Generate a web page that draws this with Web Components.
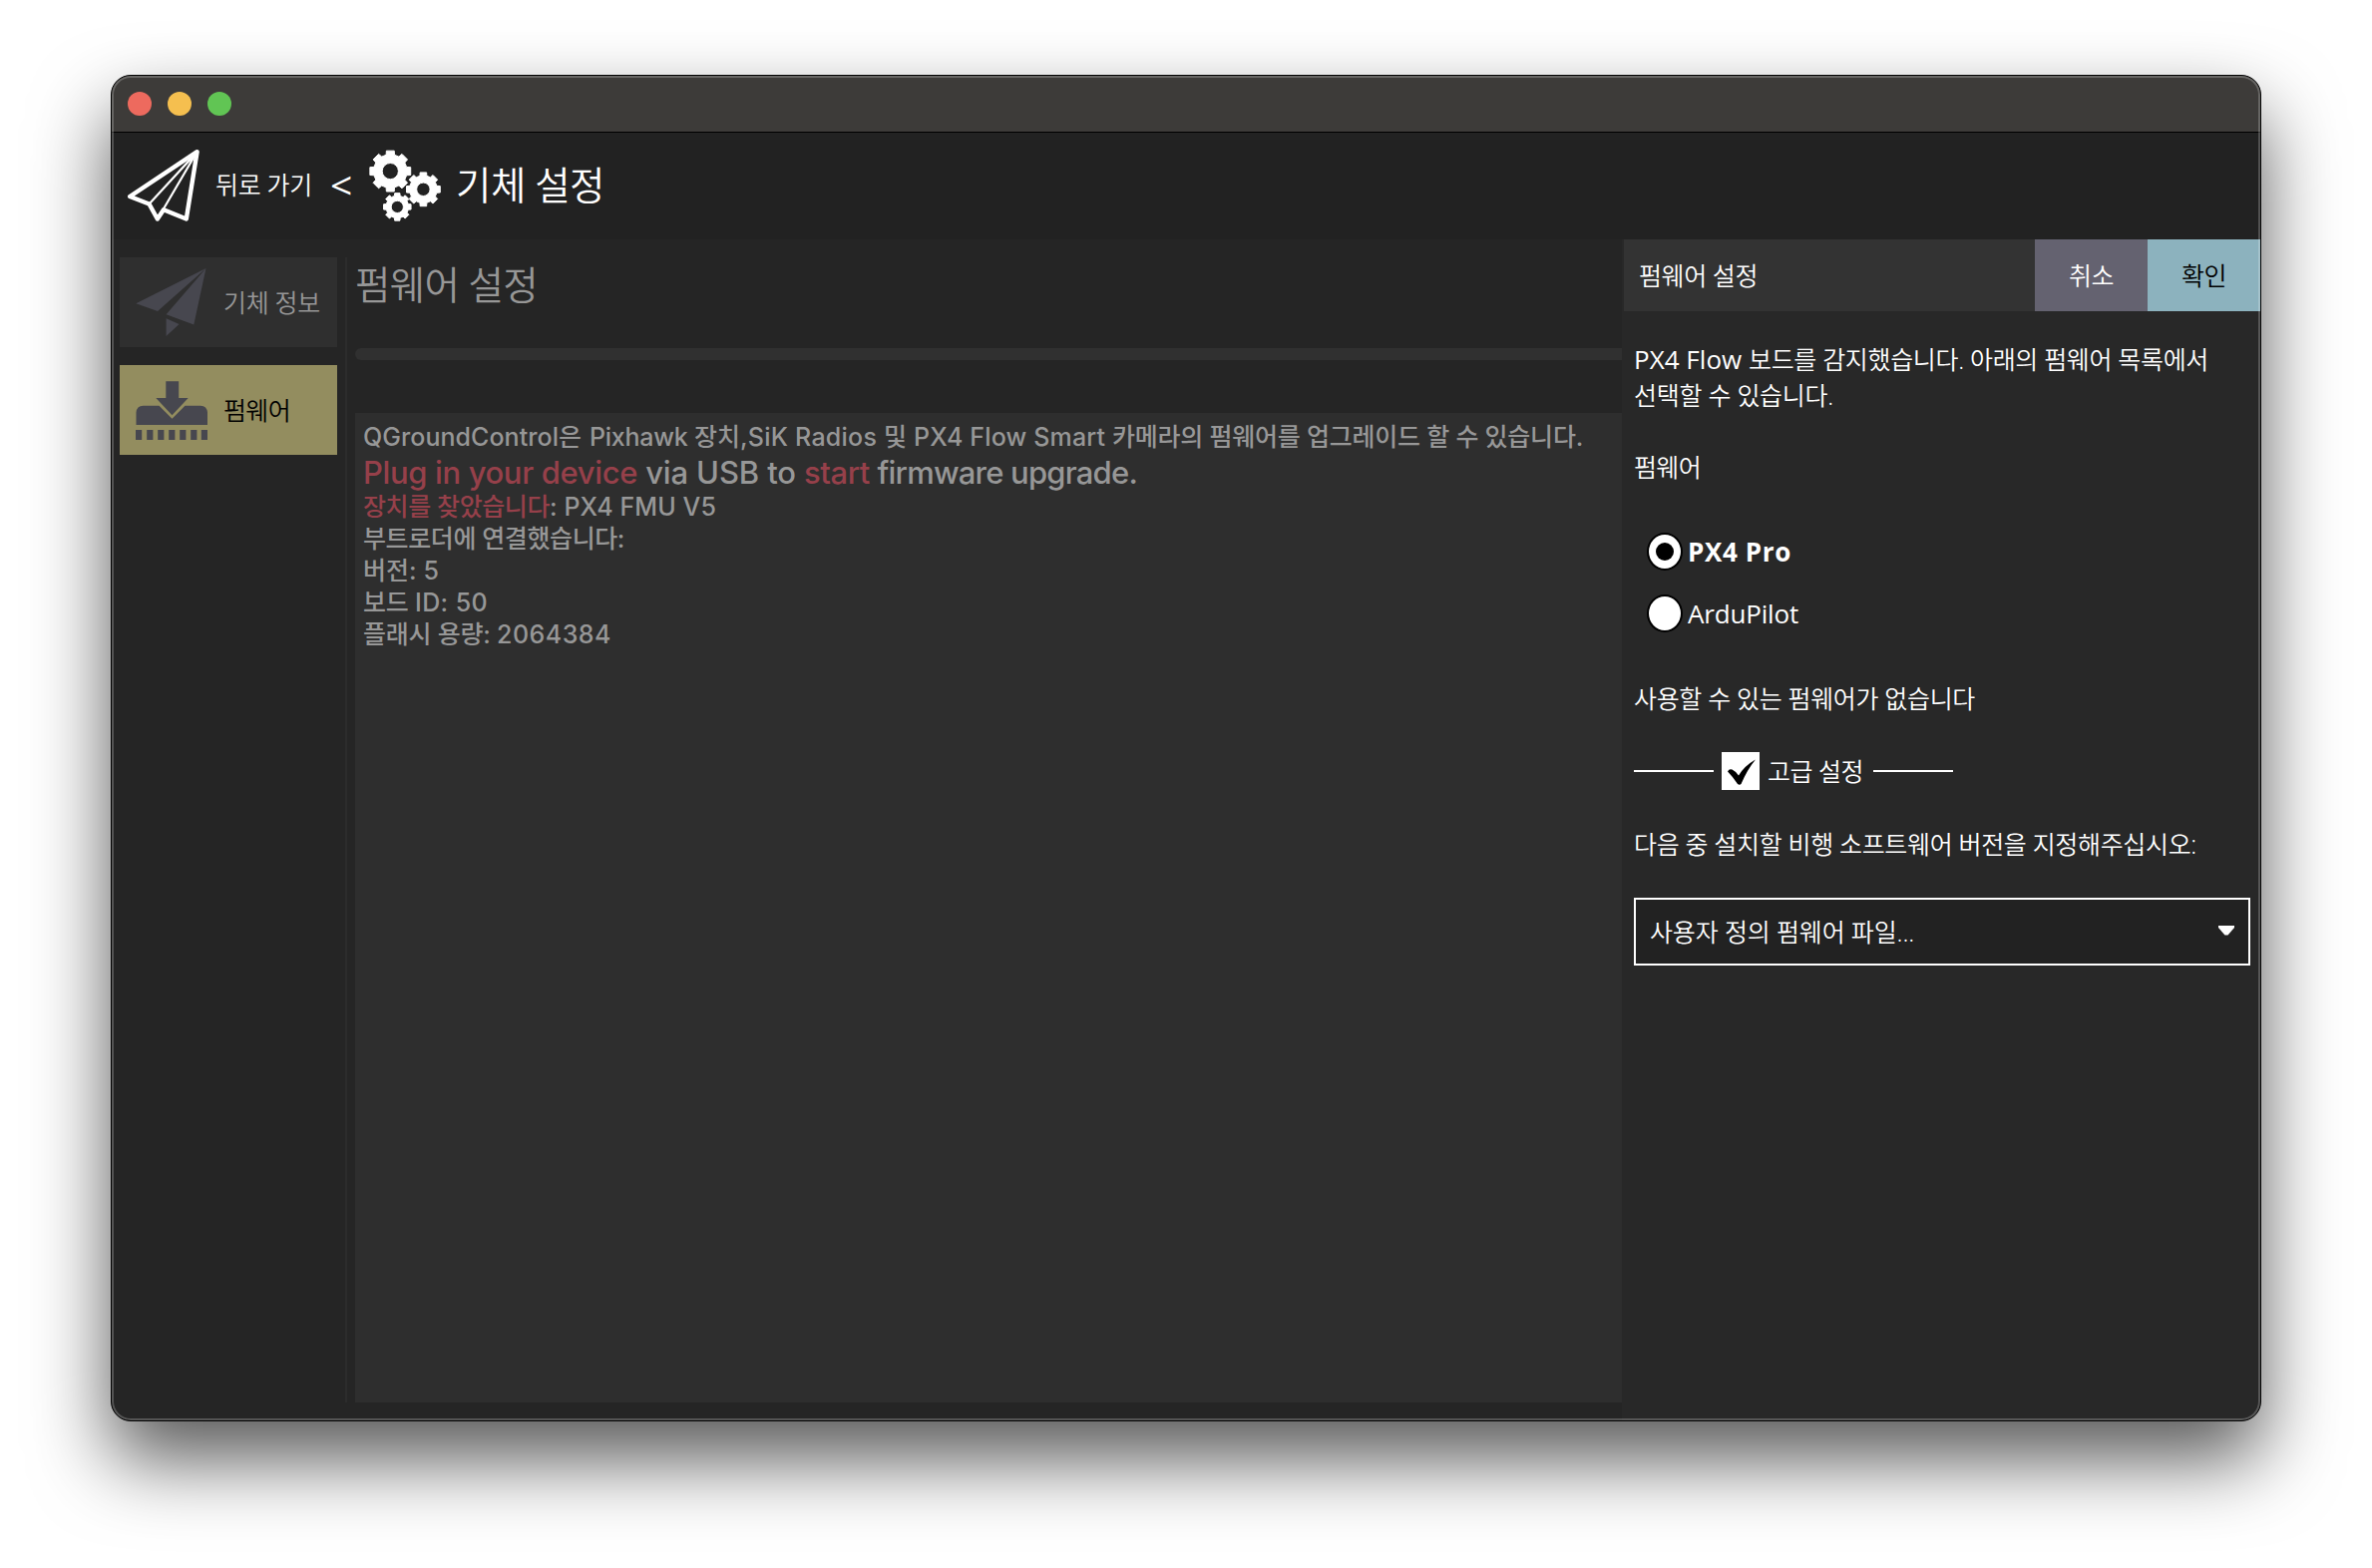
<!DOCTYPE html>
<html lang="ko">
<head>
<meta charset="utf-8">
<title>기체 설정</title>
<style>
html,body{margin:0;height:100%;background:#fff;overflow:hidden}
body{display:block;padding:75px 111px;box-sizing:border-box;font-family:"Open Sans","Noto Sans CJK KR",sans-serif;color:#fff}
</style>
</head>
<body>
<gs-window>
  <gs-toolbar slot="toolbar"></gs-toolbar>
  <gs-sidebar slot="side"></gs-sidebar>
  <gs-firmware slot="main"></gs-firmware>
  <gs-panel slot="panel"></gs-panel>
</gs-window>
<script>
const define=(name,html,after)=>customElements.define(name,class extends HTMLElement{
  constructor(){super();this.attachShadow({mode:'open'}).innerHTML=html;}
  connectedCallback(){if(after)after(this);}
});

/* A run of text tracked to an exact advance width: w = width, s = font size. */
define('gs-text',`<style>
:host{display:inline-block;white-space:pre;line-height:36px;font-size:25px}
:host([light]){font-weight:350}
</style><slot></slot>`,el=>{
  const s=el.getAttribute('s'),w=+el.getAttribute('w');
  if(s)el.style.fontSize=s+'px';
  if(w){
    el.style.width='max-content';
    const natural=el.getBoundingClientRect().width,n=[...el.textContent].length;
    el.style.letterSpacing=((w-natural)/n).toFixed(3)+'px';
    el.style.width=w+'px';
  }
});

function gear(cx,cy,r,hole){
  const n=8,ri=r*.81,p=[];
  for(let i=0;i<n;i++){
    const a=i*2*Math.PI/n;
    for(const [d,rad] of [[-.25,ri],[-.19,r],[.19,r],[.25,ri]])
      p.push((cx+rad*Math.sin(a+d)).toFixed(2)+' '+(cy-rad*Math.cos(a+d)).toFixed(2));
  }
  return `<path fill-rule="evenodd" stroke="#fff" stroke-width="1" stroke-linejoin="round" d="M${p.join('L')}ZM${cx-hole} ${cy}a${hole} ${hole} 0 1 0 ${2*hole} 0a${hole} ${hole} 0 1 0 ${-2*hole} 0Z"/>`;
}
define('gs-icon-gears',`<style>:host{display:block;width:72px;height:72px}svg{display:block}</style>
<svg width="72" height="72" fill="#fff">${gear(21.3,21.6,20.8,8.1)}${gear(54.4,39.8,17.2,6.7)}${gear(28.3,57.4,14,6.1)}</svg>`);

define('gs-icon-plane-outline',`<style>:host{display:block;width:72px;height:72px}svg{display:block}</style>
<svg width="72" height="72" fill="none" stroke="#fff" stroke-linejoin="round" stroke-linecap="round">
<path stroke-width="4.400" d="M69.600 2.200L2.200 47L21.500 54.500L29.800 69.500L36 60.300L58.800 69.500Z"/>
<path stroke-width="2.200" d="M69 3L22 54M69 3L35 61"/></svg>`);

define('gs-icon-plane',`<style>:host{display:block;width:72px;height:72px}svg{display:block}</style>
<svg width="72" height="72" fill="#47474f"><path d="M.3 37.300L70.500 2L22 45ZM70.500 2L58.300 58.500L30.600 48.300ZM30.600 52.300L43.600 58L30.600 70Z"/></svg>`);

define('gs-icon-firmware',`<style>:host{display:block;width:72px;height:72px}svg{display:block}</style>
<svg width="72" height="72" fill="#47474f"><path d="M.5 51V38.500Q1 32 7.500 31.700H23.500L36.500 44.700L49.500 31.700H65Q71.500 32 72 38.500V51Z"/>
<path d="M30.300 7.300H43.200V24H52.700L36.500 41.200L20.300 24H30.300Z"/>
<path d="M0 56h6.200v10H0zM11.200 56h6.200v10h-6.200zM22.200 56h6.200v10h-6.200zM33.200 56h6.200v10h-6.200zM44.200 56h6.200v10h-6.200zM55.200 56h6.200v10h-6.200zM65.800 56h6.200v10h-6.200z"/></svg>`);

define('gs-window',`<style>
:host{display:grid;grid-template-rows:56px 108px 1fr;grid-template-columns:228px 1286px 1fr;position:relative;width:2154px;height:1348px;
 border:1px solid #000;border-radius:20px;overflow:hidden;background:#252525}
:host{box-shadow:0 38px 78px rgba(0,0,0,.66)}
.bar{grid-column:1/-1;background:#3d3b39;display:flex;align-items:center;gap:16px;padding-left:16px;box-sizing:border-box}
i{width:24px;height:24px;border-radius:50%}
.tool{grid-column:1/-1;background:#222;border-top:1px solid #000;display:flex}
.rim{position:absolute;inset:0;border-radius:19px;box-shadow:inset 0 0 0 2px rgba(255,255,255,.22);pointer-events:none}
</style>
<div class="bar"><i style="background:#ed6a5e"></i><i style="background:#f5bf4f"></i><i style="background:#61c554"></i></div>
<div class="tool"><slot name="toolbar"></slot></div>
<slot name="side"></slot><slot name="main"></slot><slot name="panel"></slot>
<div class="rim"></div>`);

define('gs-toolbar',`<style>
:host{display:flex;align-items:center;padding:0 0 1px 16px}
.back{margin-left:16px}.lt{margin:0 18px 0 18px}.title{margin-left:15px}
gs-text{padding-bottom:2px}
gs-text.title,gs-text.lt{line-height:54px}
</style>
<gs-icon-plane-outline></gs-icon-plane-outline>
<gs-text light class="back" w="97">뒤로 가기</gs-text>
<gs-text class="lt" s="39" w="21">&lt;</gs-text>
<gs-icon-gears></gs-icon-gears>
<gs-text light class="title" s="38.5" w="149">기체 설정</gs-text>`);

define('gs-nav-button',`<style>
:host{display:flex;align-items:center;height:90px;width:218px;box-sizing:border-box;padding-left:16px;gap:16px;background:#2f2f2f;color:#979797}
:host([active]){background:#938d5f;color:#000}
</style><slot name="icon"></slot><slot></slot>`);

define('gs-sidebar',`<style>
:host{display:flex;flex-direction:column;gap:18px;margin:18px 0;padding-left:8px}
</style>
<gs-nav-button><gs-icon-plane slot="icon"></gs-icon-plane><gs-text light w="97">기체 정보</gs-text></gs-nav-button>
<gs-nav-button active><gs-icon-firmware slot="icon"></gs-icon-firmware><gs-text light w="67">펌웨어</gs-text></gs-nav-button>`);

define('gs-firmware',`<style>
:host{display:flex;flex-direction:column;margin:18px 0 18px 6px;border-left:2px solid #2c2c2c;padding-left:8px;color:#979797;width:1270px}
.head{display:flex;height:54px}
.head gs-text{line-height:54px}
.progress{height:12px;border-radius:6px 0 0 6px;background:#303030;margin:37px 0 53px}
.log{flex:1;background:#2e2e2e;padding:8px 0 0 8px;font-family:Inter,"Noto Sans CJK KR",sans-serif;font-weight:500}
.row{display:flex;height:32px}.row gs-text{line-height:32px}
.big{height:38px}.big gs-text{line-height:39px}
.red{color:#96404a}
</style>
<div class="head"><gs-text light s="38.5" w="183">펌웨어 설정</gs-text></div>
<div class="progress"></div>
<div class="log">
<div class="row"><gs-text w="196">QGroundControl</gs-text><gs-text w="31">은 </gs-text><gs-text w="105">Pixhawk </gs-text><gs-text w="46">장치</gs-text><gs-text w="144">,SiK Radios </gs-text><gs-text w="30">및 </gs-text><gs-text w="199">PX4 Flow Smart </gs-text><gs-text w="472">카메라의 펌웨어를 업그레이드 할 수 있습니다.</gs-text></div>
<div class="row big"><gs-text class="red" s="31" w="275">Plug in your device</gs-text><gs-text s="31" w="167"> via USB to </gs-text><gs-text class="red" s="31" w="66">start</gs-text><gs-text s="31" w="268"> firmware upgrade.</gs-text></div>
<div class="row"><gs-text class="red" w="187">장치를 찾았습니다</gs-text><gs-text w="167">: PX4 FMU V5</gs-text></div>
<div class="row"><gs-text w="262">부트로더에 연결했습니다:</gs-text></div>
<div class="row"><gs-text w="76">버전: 5</gs-text></div>
<div class="row"><gs-text w="52">보드 </gs-text><gs-text w="73">ID: 50</gs-text></div>
<div class="row"><gs-text w="134">플래시 용량: </gs-text><gs-text w="115">2064384</gs-text></div>
</div>`);

define('gs-radio',`<style>
:host{display:flex;align-items:center;height:38px;gap:5px;padding-left:13px}
.dot{width:36px;height:38px;box-sizing:border-box;border:2px solid #000;border-radius:50%;background:#fff;display:flex;align-items:center;justify-content:center}
:host([checked]){font-weight:700}
:host([checked]) .dot::after{content:"";width:18px;height:18px;border-radius:50%;background:#000}
</style><span class="dot"></span><slot></slot>`);

define('gs-section-toggle',`<style>
:host{display:flex;align-items:center;height:38px}
hr{width:80px;height:2px;margin:0;border:0;background:#fff}
.box{width:38px;height:38px;background:#fff;margin:0 8px}
gs-text{margin-right:10px}svg{display:block}
</style><hr><span class="box"><svg width="38" height="38"><path d="M6 19.500Q7.500 16.200 10.500 17.500Q14.500 19.500 17 23.500Q23 13.500 34 7.500Q26 17 19.500 32Q18 33.500 16 32Q11 24.500 6 19.500Z"/></svg></span><gs-text light w="96">고급 설정</gs-text><hr>`);

define('gs-combo',`<style>
:host{display:flex;align-items:center;justify-content:space-between;width:618px;height:68px;box-sizing:border-box;border:2px solid #fff;background:#222;padding:0 14px}
svg{display:block;margin-top:-3px}
</style><slot></slot><svg width="16" height="10"><path fill="#fff" d="M0 0H16V2L9.500 9.500H6.500L0 2Z"/></svg>`);

define('gs-panel',`<style>
:host{display:flex;flex-direction:column;background:#282828;border-left:0}
header{display:flex;height:72px;margin-left:2px;background:#333}
header gs-text{line-height:72px}
.t{flex:1;padding-left:15px}
.btn{width:113px;display:flex;justify-content:center;background:#646270}
.ok{background:#8cb2be;color:#000}
.body{display:flex;flex-direction:column;align-items:flex-start;gap:36px;padding:30px 0 0 12px}
.line{display:flex}
.radios{display:flex;flex-direction:column;gap:24px;margin:12px 0}
</style>
<header><div class="t"><gs-text light w="119">펌웨어 설정</gs-text></div><div class="btn"><gs-text light w="45">취소</gs-text></div><div class="btn ok"><gs-text light w="45">확인</gs-text></div></header>
<div class="body">
<div><div class="line"><gs-text s="26" w="115">PX4 Flow </gs-text><gs-text light w="461">보드를 감지했습니다. 아래의 펌웨어 목록에서</gs-text></div>
<div class="line"><gs-text light w="200">선택할 수 있습니다.</gs-text></div></div>
<gs-text light w="67">펌웨어</gs-text>
<div class="radios"><gs-radio checked><gs-text s="26" w="104">PX4 Pro</gs-text></gs-radio><gs-radio><gs-text s="26" w="111">ArduPilot</gs-text></gs-radio></div>
<gs-text light w="342">사용할 수 있는 펌웨어가 없습니다</gs-text>
<gs-section-toggle></gs-section-toggle>
<gs-text light w="564">다음 중 설치할 비행 소프트웨어 버전을 지정해주십시오:</gs-text>
<gs-combo><gs-text light w="265">사용자 정의 펌웨어 파일...</gs-text></gs-combo>
</div>`);
</script>
</body>
</html>
